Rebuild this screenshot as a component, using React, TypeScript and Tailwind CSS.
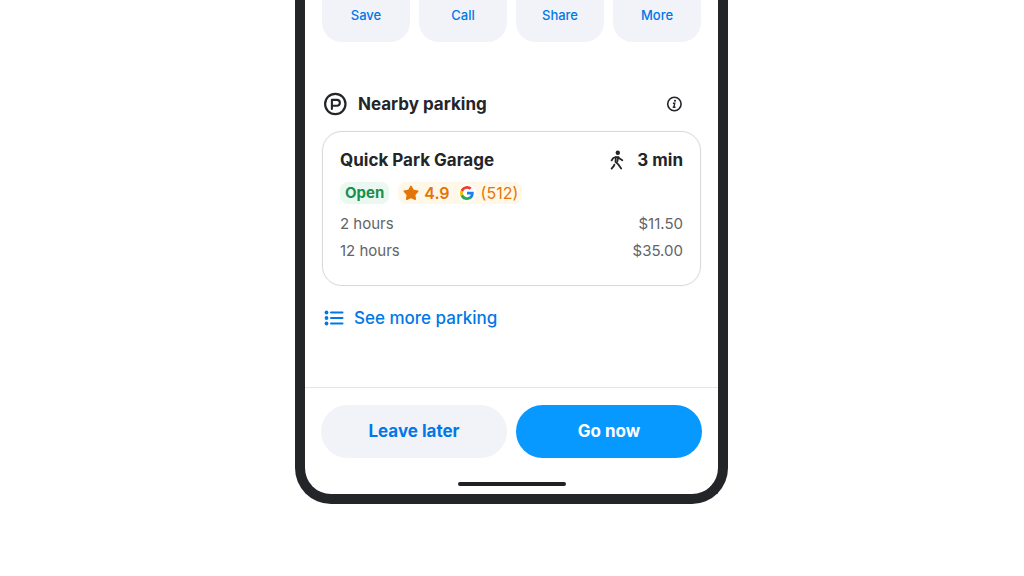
import type { ReactNode } from "react";

const actions = ["Save", "Call", "Share", "More"];

const rates = [
  { duration: "2 hours", price: "$11.50" },
  { duration: "12 hours", price: "$35.00" },
];

function ParkingIcon() {
  return (
    <svg width="24" height="24" viewBox="0 0 24 24" fill="none" stroke="currentColor" aria-hidden="true">
      <circle cx="12.3" cy="12" r="10.2" strokeWidth="2.2" />
      <path d="M8.9 16.9V7.9h5a2.95 2.95 0 0 1 0 5.9H8.9" strokeWidth="2.1" strokeLinejoin="round" strokeLinecap="round" />
    </svg>
  );
}

function InfoIcon() {
  return (
    <svg width="16" height="16" viewBox="0 0 16 16" fill="none" stroke="currentColor" aria-hidden="true">
      <circle cx="8.4" cy="8" r="6.7" strokeWidth="1.6" />
      <circle cx="9" cy="4.8" r="1.05" fill="currentColor" stroke="none" />
      <path d="M6.9 7.2h1.8L8 11.2M6.7 11.3h2.8" strokeWidth="1.4" />
    </svg>
  );
}

function WalkIcon() {
  return (
    <svg
      width="14"
      height="20"
      viewBox="0 0 14 20"
      fill="none"
      stroke="currentColor"
      strokeWidth="1.8"
      strokeLinecap="round"
      strokeLinejoin="round"
      aria-hidden="true"
    >
      <circle cx="7.8" cy="2.8" r="2.2" fill="currentColor" stroke="none" />
      <path d="M1.6 10.4 3.2 8 5.8 7.1h2.5l1.7 1.700 2.300 1.500" />
      <path d="M5.8 7.400 5.500 11.800 8.300 14.400 11.200 18.600" />
      <path d="M8.200 7.400 7.300 11.600" />
      <path d="M4.400 14.600 3.700 16.200 1.600 18.600" />
    </svg>
  );
}

function StarIcon() {
  return (
    <svg width="16" height="16" viewBox="0 0 16 16" fill="currentColor" stroke="currentColor" aria-hidden="true">
      <path
        d="M8 1.400 10.200 5.300 14.700 6.200 11.600 9.600 12.200 14.200 8 12.300 3.800 14.200 4.400 9.600 1.300 6.200 5.800 5.300Z"
        strokeWidth="1.6"
        strokeLinejoin="round"
      />
    </svg>
  );
}

function GoogleIcon() {
  return (
    <svg width="14" height="14" viewBox="0 0 24 24" aria-hidden="true">
      <path
        fill="#1a80f0"
        d="M23.500 12.300c0-.8-.1-1.600-.2-2.300H12v4.500h6.500a5.500 5.500 0 0 1-2.400 3.600v3h3.900c2.200-2.100 3.500-5.200 3.500-8.800Z"
      />
      <path
        fill="#25ab50"
        d="M12 24c3.200 0 6-1.100 8-2.900l-3.900-3c-1.100.7-2.500 1.200-4.100 1.200-3.100 0-5.800-2.100-6.700-5H1.300v3.100A12 12 0 0 0 12 24Z"
      />
      <path fill="#fbbc05" d="M5.300 14.300a7.200 7.200 0 0 1 0-4.600V6.600H1.300a12 12 0 0 0 0 10.800l4-3.100Z" />
      <path
        fill="#f03a30"
        d="M12 4.800c1.800 0 3.300.6 4.600 1.800L20 3.100A12 12 0 0 0 1.300 6.600l4 3.100c.9-2.900 3.600-4.900 6.700-4.900Z"
      />
    </svg>
  );
}

function ListIcon() {
  return (
    <svg width="20" height="16" viewBox="0 0 20 16" fill="none" stroke="currentColor" aria-hidden="true">
      <path d="M7 2.5h11.5M7 8h11.5M7 13.5h11.5" strokeWidth="2" strokeLinecap="round" />
      <g fill="currentColor" stroke="none">
        <circle cx="2.5" cy="2.5" r="1.9" />
        <circle cx="2.5" cy="8" r="1.9" />
        <circle cx="2.5" cy="13.5" r="1.9" />
      </g>
    </svg>
  );
}

function Badge({ className, children }: { className: string; children: ReactNode }) {
  return <span className={`flex h-[22px] items-center rounded-lg ${className}`}>{children}</span>;
}

function GarageCard() {
  return (
    <article className="mt-[15px] rounded-[20px] border border-[#d9dadd] px-[17px] pt-4 pb-[21px] shadow-[0_0_1px_#d9dadd]">
      <div className="flex items-center justify-between text-[17px] leading-6 font-bold">
        <h3>Quick Park Garage</h3>
        <span className="flex items-center gap-[13px]">
          <WalkIcon />
          3 min
        </span>
      </div>
      <div className="mt-[10px] flex gap-[9px]">
        <Badge className="bg-[#eaf8f1] px-[5px] text-[15px] font-bold text-[#1c8e4a]">Open</Badge>
        <Badge className="bg-[#fff8e8] pr-1 pl-[5px] text-base text-[#e37507]">
          <StarIcon />
          <span className="ml-[5px] font-semibold">4.9</span>
          <span className="mr-[5px] ml-2 flex size-[18px] items-center justify-center rounded-full bg-white">
            <GoogleIcon />
          </span>
          (512)
        </Badge>
      </div>
      <dl className="mt-[6px] text-[#626468]">
        {rates.map((rate) => (
          <div key={rate.duration} className="flex justify-between text-[15px] leading-[27px]">
            <dt>{rate.duration}</dt>
            <dd>{rate.price}</dd>
          </div>
        ))}
      </dl>
    </article>
  );
}

export default function App() {
  return (
    <main className="flex min-h-screen items-start justify-center bg-white pr-px font-['Inter',sans-serif] text-[#232529]">
      <div className="w-full max-w-[433px] overflow-hidden rounded-b-[36px] border-x-10 border-b-10 border-[#232529] bg-white">
        <div className="px-[17px]">
          <nav className="grid grid-cols-4 gap-[9px]">
            {actions.map((action) => (
              <button
                key={action}
                type="button"
                className="rounded-b-[20px] bg-[#f2f3f8] pt-[5px] pb-[17px] text-[13px] leading-5 font-medium text-[#0078e7]"
              >
                {action}
              </button>
            ))}
          </nav>

          <section className="mt-[50px]">
            <header className="flex items-center gap-[11px] pr-[19px] pl-px">
              <ParkingIcon />
              <h2 className="flex-1 text-[17px] leading-6 font-bold">Nearby parking</h2>
              <button type="button" aria-label="About nearby parking">
                <InfoIcon />
              </button>
            </header>
            <GarageCard />
            <a
              href="#parking"
              className="mt-5 flex items-center gap-[10px] pl-[2px] text-[17px] leading-6 font-medium text-[#0078e7]"
            >
              <ListIcon />
              See more parking
            </a>
          </section>
        </div>

        <footer className="mt-[57px] border-t border-[#e4e5ea] px-4 pt-[17px] pb-2">
          <div className="grid grid-cols-2 gap-[9px] text-[17px] font-bold">
            <button type="button" className="h-[53px] rounded-full bg-[#f2f3f8] text-[#0078e7]">
              Leave later
            </button>
            <button type="button" className="h-[53px] rounded-full bg-[#0799ff] text-white">
              Go now
            </button>
          </div>
          <div className="mx-auto mt-6 h-1 w-[108px] rounded-full bg-[#202124]" />
        </footer>
      </div>
    </main>
  );
}
